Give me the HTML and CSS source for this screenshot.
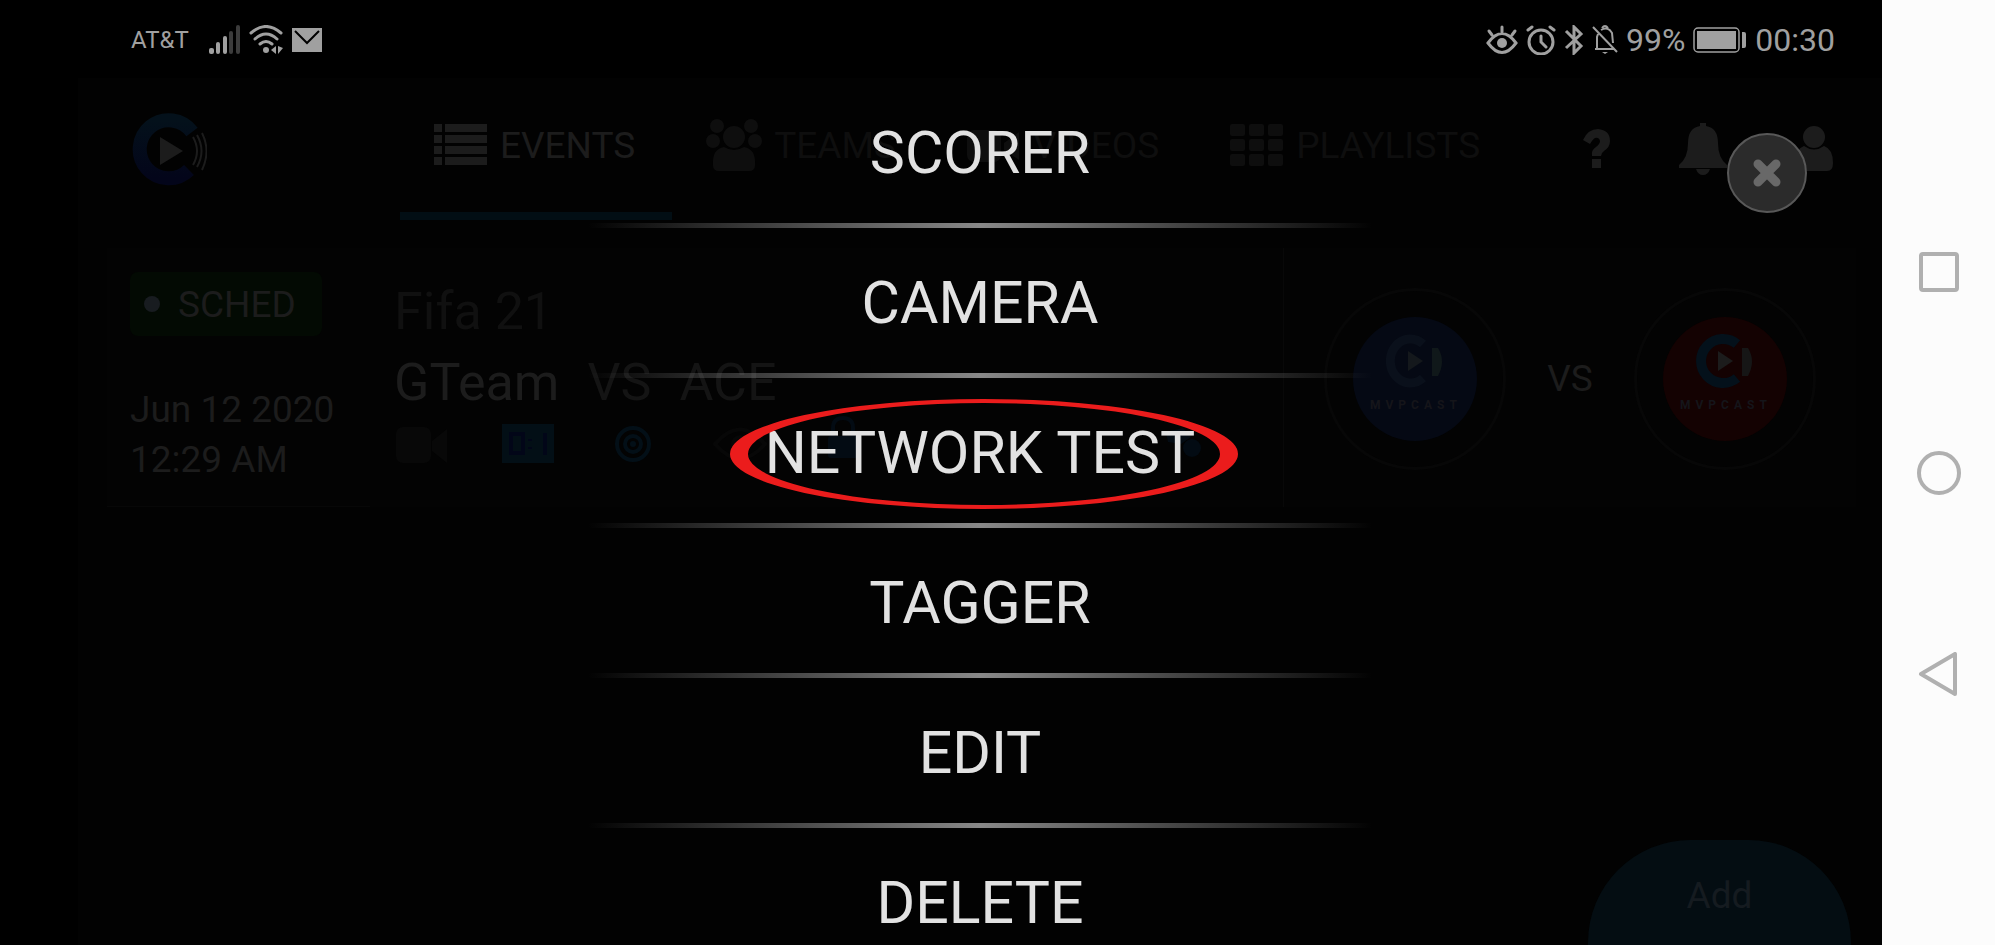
FILE: index.html
```
<!DOCTYPE html>
<html lang="en">

<head>
    <meta charset="UTF-8">
    <meta name="viewport" content="width=device-width, initial-scale=1.0">
    <title>Events</title>
    <link rel="stylesheet" href="styles.css">
</head>

<body>
    <div class="screen">
        <div class="status_bar">
            <div class="status_left">
                <span class="carrier">AT&amp;T</span>
                <svg width="32" height="30" viewBox="0 0 32 30" fill="#a0a0a0">
                    <rect x="0" y="23" width="5" height="6" rx="2" />
                    <rect x="7" y="17" width="4" height="12" rx="2" />
                    <rect x="14" y="11" width="4" height="18" rx="2" />
                    <rect x="20" y="6" width="4" height="23" rx="2" fill="#3c3c3c" />
                    <rect x="27" y="0" width="4" height="29" rx="2" fill="#3c3c3c" />
                </svg>
                <svg width="35" height="30" viewBox="0 0 35 30" fill="none" stroke="#a0a0a0" stroke-width="3" stroke-linecap="round">
                    <path d="M2 8Q17-5 32 8M6 14Q17 4 28 14M11 19Q17 14 23 19" />
                    <circle cx="17" cy="25" r="3" fill="#a0a0a0" stroke="none" />
                    <path d="M27 21v8l-5-4zM29 21l5 2-5 6z" fill="#a0a0a0" stroke="none" />
                </svg>
                <svg width="30" height="24" viewBox="0 0 30 24">
                    <path d="M0 0h30v24H0z" fill="#a0a0a0" />
                    <path d="M3 3l12 12L27 3" fill="none" stroke="#000" stroke-width="2" />
                </svg>
            </div>
            <div class="status_right">
                <svg width="32" height="30" viewBox="0 0 32 30" fill="none" stroke="#a0a0a0" stroke-width="3" stroke-linecap="round">
                    <path d="M2 18Q16-1 30 18Q16 37 2 18zM16 2v5M3 6l3 4M29 6l-3 4" />
                    <circle cx="16" cy="18" r="5" fill="#a0a0a0" stroke="none" />
                </svg>
                <svg width="30" height="30" viewBox="0 0 30 30" fill="none" stroke="#a0a0a0" stroke-width="3" stroke-linecap="round">
                    <circle cx="15" cy="17" r="12" />
                    <path d="M15 11v6l5 5M2 5l4-3M28 5l-4-3" />
                </svg>
                <svg width="20" height="30" viewBox="0 0 20 30" fill="none" stroke="#a0a0a0" stroke-width="3">
                    <path d="M2 6l15 15-7 7V2l7 7L2 23" />
                </svg>
                <svg width="26" height="30" viewBox="0 0 26 30" fill="none" stroke="#a0a0a0" stroke-width="2">
                    <path d="M1 2l24 25M3 24h19M5 23V12l1-3M9 5Q16 1 20 8l1 10M10 3q3-4 6 0" />
                    <path d="M10 27h6l-3 2z" fill="#a0a0a0" stroke="none" />
                </svg>
                <span>99%</span>
                <svg width="54" height="26" viewBox="0 0 54 26">
                    <rect x="1" y="1" width="45" height="24" rx="4" fill="none" stroke="#a0a0a0" stroke-width="1.5" />
                    <path d="M4 4h39v18H4zM49 5h2a2 2 0 0 1 2 2v12a2 2 0 0 1-2 2h-2z" fill="#a0a0a0" />
                </svg>
                <span>00:30</span>
            </div>
        </div>

        <div class="app">
            <header class="header">
                <a class="logo" href="#" aria-label="Home">
                    <svg width="76" height="74" viewBox="0 0 76 74" fill="none">
                        <defs>
                            <linearGradient id="ring" x1="0" y1="0" x2="0" y2="1">
                                <stop offset="0" stop-color="#04111b" />
                                <stop offset="1" stop-color="#03051a" />
                            </linearGradient>
                        </defs>
                        <path d="M61 20A29 29 0 1 0 58 58" stroke="url(#ring)" stroke-width="14" />
                        <path d="M29 25l23 14-23 14z" fill="#1c1c1c" />
                        <path d="M62 25q8 14 0 28M66 23q9 16 0 32M71 21q9 18 0 37" stroke="#1c1c1c" stroke-width="2" />
                    </svg>
                </a>
                <nav class="tabs">
                    <a class="tab active" href="#">
                        <svg width="54" height="44" viewBox="0 0 54 44" fill="currentColor">
                            <path d="M0 1h8v8H0zM11 1h42v8H11zM0 12h8v8H0zM11 12h42v8H11zM0 23h8v8H0zM11 23h42v8H11zM0 34h8v8H0zM11 34h42v8H11z" />
                        </svg>
                        EVENTS
                    </a>
                    <a class="tab" href="#">
                        <svg width="56" height="54" viewBox="0 0 56 54" fill="currentColor">
                            <circle cx="11" cy="8" r="7" /><circle cx="45" cy="8" r="7" />
                            <circle cx="7" cy="23" r="7" /><circle cx="49" cy="23" r="7" />
                            <circle cx="28" cy="19" r="11" />
                            <path d="M18 29q10 6 20 0 12 2 11 18 0 6-6 6H13q-6 0-6-6-1-16 11-18z" />
                        </svg>
                        TEAMS
                    </a>
                    <a class="tab" href="#">
                        <svg width="54" height="44" viewBox="0 0 54 44" fill="currentColor">
                            <rect x="0" y="7" width="34" height="32" rx="7" />
                            <path d="M37 20l15-11v28L37 27z" />
                        </svg>
                        VIDEOS
                    </a>
                    <a class="tab" href="#">
                        <svg width="54" height="44" viewBox="0 0 54 44" fill="currentColor">
                            <rect x="0" y="1" width="15" height="12" rx="2" /><rect x="19" y="1" width="15" height="12" rx="2" /><rect x="38" y="1" width="15" height="12" rx="2" />
                            <rect x="0" y="16" width="15" height="12" rx="2" /><rect x="19" y="16" width="15" height="12" rx="2" /><rect x="38" y="16" width="15" height="12" rx="2" />
                            <rect x="0" y="31" width="15" height="12" rx="2" /><rect x="19" y="31" width="15" height="12" rx="2" /><rect x="38" y="31" width="15" height="12" rx="2" />
                        </svg>
                        PLAYLISTS
                    </a>
                </nav>
                <div class="tools">
                    <button class="tool" aria-label="Help">
                        <svg width="28" height="40" viewBox="0 0 28 40" fill="#1c1c1c">
                            <path d="M0 11Q5 0 15 0q12 1 12 12 0 6-6 10-3 2-3 5H9q-1-6 4-9 4-3 4-6-1-4-5-3-2 1-5 6zM9 30h9v9H9z" />
                        </svg>
                    </button>
                    <button class="tool" aria-label="Notifications">
                        <svg width="48" height="54" viewBox="0 0 48 54" fill="#1c1c1c">
                            <path d="M21 4V1h6v3q12 2 12 17 0 15 9 22v3H0v-3q9-7 9-22Q9 6 21 4zM17 47h14q-2 6-7 6t-7-6z" />
                        </svg>
                    </button>
                    <button class="tool" aria-label="Account">
                        <svg width="38" height="46" viewBox="0 0 38 46" fill="#1c1c1c">
                            <circle cx="19" cy="11" r="11" />
                            <path d="M9 20q10 7 20 0 9 3 9 17 0 8-6 8H6q-6 0-6-8 0-14 9-17z" />
                        </svg>
                    </button>
                </div>
            </header>

            <main>
                <article class="card">
                    <div class="card_date">
                        <span class="badge">SCHED</span>
                        <time>Jun 12 2020<br>12:29 AM</time>
                    </div>
                    <div class="card_info">
                        <div class="event_name">Fifa 21</div>
                        <div class="event_teams"><span>GTeam</span><span>VS</span><span>ACE</span></div>
                        <div class="card_icons">
                            <svg width="54" height="50" viewBox="0 0 54 50" fill="#080808">
                                <rect x="2" y="13" width="35" height="36" rx="7" />
                                <path d="M38 27l15-12v34L38 37z" />
                            </svg>
                            <svg width="54" height="50" viewBox="0 0 54 50">
                                <path d="M0 10h52v39H0z" fill="#030f16" />
                                <path d="M9 20h12v19H9zM28 25v2M28 33v2M43 19v22" fill="none" stroke="#020618" stroke-width="4" />
                            </svg>
                            <svg width="46" height="50" viewBox="0 0 46 50" fill="none" stroke="#030f17" stroke-width="4">
                                <circle cx="23" cy="30" r="16" />
                                <circle cx="23" cy="30" r="8" />
                                <circle cx="23" cy="30" r="3" fill="#030f17" stroke="none" />
                            </svg>
                            <svg width="64" height="50" viewBox="0 0 64 50" fill="none" stroke="#070707" stroke-width="4">
                                <path d="M5 30Q30 1 55 30Q30 59 5 30z" />
                                <circle cx="30" cy="30" r="7" />
                            </svg>
                            <svg width="30" height="50" viewBox="0 0 30 50" fill="none">
                                <path d="M5 22V14q0-10 10-10t10 10v8" stroke="#030b13" stroke-width="4" />
                                <rect y="22" width="30" height="22" rx="3" fill="#030b13" />
                            </svg>
                            <svg class="share" width="38" height="50" viewBox="0 0 38 50" fill="#030b13">
                                <path d="M2 18l17-4 8 9-10 7-13-2z" />
                                <circle cx="28" cy="34" r="9" />
                            </svg>
                        </div>
                    </div>
                    <div class="card_match">
                        <div class="team team_blue">
                            <svg viewBox="0 0 124 124" fill="none">
                                <path d="M70 27A20 22 0 1 0 70 61" stroke="#0a101b" stroke-width="9" />
                                <path d="M55 34l15 10-15 10z" fill="#14181c" />
                                <path d="M79 31h6q8 13 0 28h-6z" fill="#10181a" />
                                <text x="17" y="92">MVPCAST</text>
                            </svg>
                        </div>
                        <span class="versus">VS</span>
                        <div class="team team_red">
                            <svg viewBox="0 0 124 124" fill="none">
                                <path d="M74 27A22 22 0 1 0 74 61" stroke="#04111b" stroke-width="10" />
                                <path d="M55 34l15 10-15 10z" fill="#1c1c1c" />
                                <path d="M79 31h6q8 13 0 28h-6z" fill="#161616" />
                                <text x="17" y="92">MVPCAST</text>
                            </svg>
                        </div>
                    </div>
                </article>
            </main>
            <button class="add_btn">Add</button>
        </div>

        <div class="menu">
            <button class="menu_item">SCORER</button>
            <button class="menu_item">CAMERA</button>
            <button class="menu_item">NETWORK TEST
                <svg class="marker" width="508" height="112" viewBox="0 0 508 112">
                    <path fill="#eb1c1c" fill-rule="evenodd" d="M0 56a254 55 0 1 1 508 0a254 55 0 1 1-508 0zM18 56a236 51 0 1 0 472 0a236 51 0 1 0-472 0z" />
                </svg>
            </button>
            <button class="menu_item">TAGGER</button>
            <button class="menu_item">EDIT</button>
            <button class="menu_item">DELETE</button>
        </div>
        <button class="close_btn" aria-label="Close">
            <svg width="28" height="28" viewBox="0 0 28 28" stroke="#686868" stroke-width="9" stroke-linecap="round">
                <path d="M5 5l18 18M23 5L5 23" />
            </svg>
        </button>
    </div>

    <div class="nav_bar">
        <button aria-label="Recent apps">
            <svg width="44" height="44" viewBox="0 0 44 44"><rect x="4" y="4" width="36" height="36" rx="2" /></svg>
        </button>
        <button aria-label="Home">
            <svg width="44" height="44" viewBox="0 0 44 44"><circle cx="22" cy="22" r="20" /></svg>
        </button>
        <button aria-label="Back">
            <svg width="44" height="44" viewBox="0 0 44 44"><path d="M38 2v40L4 22z" stroke-linejoin="round" /></svg>
        </button>
    </div>
</body>

</html>
```
FILE: styles.css
```
* {
    box-sizing: border-box;
}

body {
    margin: 0;
    height: 100vh;
    display: flex;
    overflow: hidden;
    background-color: #000;
    font-family: Roboto, "Liberation Sans", sans-serif;
}

button {
    margin: 0;
    padding: 0;
    border: 0;
    background: none;
    font-family: inherit;
    cursor: pointer;
}

a {
    color: inherit;
    text-decoration: none;
}

svg {
    display: block;
    flex-shrink: 0;
}

.screen {
    position: relative;
    flex: 1;
    display: flex;
    flex-direction: column;
    padding-left: 78px;
    overflow: hidden;
}

/* status bar */
.status_bar {
    height: 78px;
    flex-shrink: 0;
    display: flex;
    justify-content: space-between;
    align-items: center;
    padding: 2px 47px 0 53px;
    color: #a0a0a0;
    font-size: 32px;
}

.status_left,
.status_right {
    display: flex;
    align-items: center;
    gap: 8px;
}

.carrier {
    font-size: 24px;
    margin-right: 12px;
}

/* app behind the menu */
.app {
    position: relative;
    flex: 1;
    background-color: #020202;
    color: #1c1c1c;
    font-size: 37px;
}

.header {
    display: flex;
    height: 142px;
    padding: 0 49px 0 53px;
}

.logo {
    width: 269px;
    padding-top: 34px;
}

.tabs {
    display: flex;
}

.tab {
    display: flex;
    align-items: center;
    gap: 12px;
    padding: 0 37px 0 34px;
    border-bottom: 8px solid transparent;
    color: #0e0e0e;
}

.tab.active {
    color: #1c1c1c;
    border-bottom-color: #020e14;
}

.tools {
    flex: 1;
    display: flex;
    align-items: center;
    justify-content: flex-end;
    gap: 68px;
}

.card {
    display: flex;
    height: 259px;
    margin: 28px 26px 0 29px;
    background-color: #030303;
}

.card_date {
    width: 263px;
    padding: 24px 0 0 23px;
    border-bottom: 1px solid #070707;
}

.badge {
    display: flex;
    align-items: center;
    gap: 18px;
    width: 192px;
    height: 64px;
    padding-left: 14px;
    border-radius: 8px;
    background-color: #030a03;
}

.badge::before {
    content: "";
    width: 16px;
    height: 16px;
    border-radius: 50%;
    background-color: #181c20;
}

.card_date time {
    display: block;
    margin-top: 49px;
    line-height: 50px;
}

.card_info {
    flex: 1;
    padding: 28px 0 0 24px;
    font-size: 52px;
    line-height: 71px;
}

.event_name {
    color: #101010;
}

.event_teams {
    display: flex;
    gap: 28px;
    color: #141414;
}

.event_teams span:first-child {
    color: #1c1c1c;
}

.card_icons {
    display: flex;
    gap: 54px;
    margin-top: -4px;
}

.share {
    margin-left: 252px;
}

.card_match {
    width: 573px;
    display: flex;
    align-items: center;
    justify-content: center;
    gap: 41px;
    padding-top: 2px;
    border-left: 1px solid #080808;
}

.team {
    width: 182px;
    height: 182px;
    padding: 26px;
    border: 3px solid #070707;
    border-radius: 50%;
}

.team svg {
    border-radius: 50%;
    font-size: 12px;
    font-weight: bold;
    letter-spacing: 5px;
}

.team text {
    fill: #15151a;
}

.team_blue svg {
    background-color: #050914;
}

.team_red svg {
    background-color: #140202;
}

.add_btn {
    position: absolute;
    right: 31px;
    bottom: -100px;
    width: 263px;
    height: 205px;
    padding-bottom: 94px;
    border-radius: 103px;
    background-color: #040d12;
    color: #151b20;
    font-size: 37px;
    line-height: 60px;
}

/* popup menu */
.menu {
    position: absolute;
    top: 78px;
    left: 78px;
    right: 0;
    display: flex;
    flex-direction: column;
    align-items: center;
}

.menu_item {
    position: relative;
    width: 784px;
    height: 150px;
    padding-top: 4px;
    padding-bottom: 5px;
    background: linear-gradient(to right, transparent, #888, transparent) bottom / 100% 5px no-repeat;
    color: #e2e2e2;
    font-size: 59px;
}

.marker {
    position: absolute;
    top: 20px;
    left: 50%;
    margin-left: -250px;
}

.close_btn {
    position: absolute;
    top: 133px;
    right: 75px;
    width: 80px;
    height: 80px;
    display: flex;
    align-items: center;
    justify-content: center;
    border: 2px solid #585858;
    border-radius: 50%;
    background-color: #2b2b2b;
}

/* android buttons */
.nav_bar {
    width: 113px;
    display: flex;
    flex-direction: column;
    align-items: center;
    justify-content: center;
    gap: 157px;
    background-color: #fcfcfc;
}

.nav_bar svg {
    fill: none;
    stroke: #b0b0b0;
    stroke-width: 4;
}
```
